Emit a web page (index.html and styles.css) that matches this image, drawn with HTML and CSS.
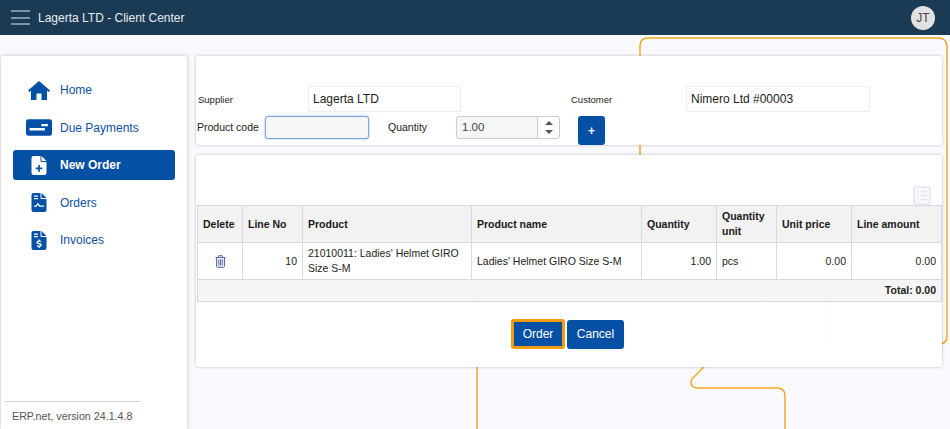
FILE: index.html
```html
<!DOCTYPE html>
<html>
<head>
	<title>Lagerta LTD - Client Center</title>
	<link rel="stylesheet" href="styles.css">
</head>
<body>
	<svg class="lines" width="950" height="429" viewBox="0 0 950 429">
		<path d="M640 160V46q0-8 8-8H938q9 0 9 9V336q0 8-8 8H828V300"/>
		<path d="M477 429V300"/>
		<path d="M785 429V396q0-8-8-8H698q-7 0-7-6q0-3 3-5L770 300"/>
	</svg>

	<header class="topbar">
		<div class="burger"><span></span><span></span><span></span></div>
		<div class="app-title">Lagerta LTD - Client Center</div>
		<div class="avatar">JT</div>
	</header>

	<div class="main">
		<aside class="sidebar">
			<nav class="nav">
				<a class="nav-item">
					<svg class="nav-icon" viewBox="0 0 22 19"><path d="M11 0L0 9.500 1.300 11 3 9.600V19H8.500V12.500H13.500V19H19V9.600L20.700 11 22 9.500Z"/></svg>
					Home
				</a>
				<a class="nav-item">
					<svg class="nav-icon" viewBox="0 0 22 14"><path fill-rule="evenodd" d="M2 0H20Q22 0 22 2V12Q22 14 20 14H2Q0 14 0 12V2Q0 0 2 0ZM3 7.500V9.500H16V7.500ZM13 4V6H18.500V4Z"/></svg>
					Due Payments
				</a>
				<a class="nav-item active">
					<svg class="nav-icon" viewBox="0 0 15 19"><path fill-rule="evenodd" d="M2 0H9V5Q9 6 10 6H15V17Q15 19 13 19H2Q0 19 0 17V2Q0 0 2 0ZM10 0L15 5H10ZM6.700 9V11.500H4.200V13.200H6.700V15.700H8.400V13.200H10.900V11.500H8.400V9Z"/></svg>
					New Order
				</a>
				<a class="nav-item">
					<svg class="nav-icon" viewBox="0 0 15 19"><path fill-rule="evenodd" d="M2 0H9V5Q9 6 10 6H15V17Q15 19 13 19H2Q0 19 0 17V2Q0 0 2 0ZM10 0L15 5H10ZM2.500 2.500V3.700H6.500V2.500ZM2.500 5V6.200H6.500V5ZM2.500 12.500V13.700H5L6.300 11.800 7.800 13.700H12.500V12.500H8.500L6.300 9.800 4.400 12.500Z"/></svg>
					Orders
				</a>
				<a class="nav-item">
					<svg class="nav-icon" viewBox="0 0 15 19"><path fill-rule="evenodd" d="M2 0H9V5Q9 6 10 6H15V17Q15 19 13 19H2Q0 19 0 17V2Q0 0 2 0ZM10 0L15 5H10ZM2.500 2.500V3.700H6.500V2.500ZM2.500 5V6.200H6.500V5ZM7 8.500V9.500C5.700 9.700 5 10.500 5 11.500C5 13.800 8.800 13 8.800 14.200C8.800 14.800 7 14.800 5.400 14.200V15.500C6 15.700 6.500 15.800 7 15.800V17H8.200V15.800C9.500 15.600 10.200 14.900 10.200 13.900C10.200 11.600 6.400 12.400 6.400 11.300C6.400 10.700 8 10.700 9.600 11.200V10C9.100 9.800 8.700 9.700 8.200 9.600V8.500Z"/></svg>
					Invoices
				</a>
			</nav>
			<div class="version">ERP.net, version 24.1.4.8</div>
		</aside>

		<div class="content">
			<section class="panel order-form">
				<div class="form-row">
					<label class="lbl-small lbl-supplier">Supplier</label>
					<div class="field field-supplier">Lagerta LTD</div>
					<label class="lbl-small lbl-customer">Customer</label>
					<div class="field field-customer">Nimero Ltd #00003</div>
				</div>
				<div class="form-row row-entry">
					<label class="lbl lbl-code">Product code</label>
					<div class="input input-code"></div>
					<label class="lbl lbl-qty">Quantity</label>
					<div class="input input-qty">
						<span class="qty-value">1.00</span>
						<span class="spinner"><i class="arrow-up"></i><i class="arrow-down"></i></span>
					</div>
					<button type="button" class="btn btn-add">+</button>
				</div>
			</section>

			<section class="panel order-lines">
				<div class="toolbar">
					<svg class="list-icon" width="18" height="19" viewBox="0 0 18 19"><rect x="1" y="1" width="16" height="17" rx="1.500"/><path d="M4 5.500H5.500M7.500 5.500H14M4 9.500H5.500M7.500 9.500H14M4 13.500H5.500M7.500 13.500H14"/></svg>
				</div>
				<table class="lines-table">
					<colgroup>
						<col class="c-del"><col class="c-no"><col class="c-prod"><col class="c-name"><col class="c-qty"><col class="c-unit"><col class="c-price"><col class="c-amount">
					</colgroup>
					<tr>
						<th>Delete</th>
						<th>Line No</th>
						<th>Product</th>
						<th>Product name</th>
						<th>Quantity</th>
						<th>Quantity unit</th>
						<th>Unit price</th>
						<th>Line amount</th>
					</tr>
					<tr>
						<td class="center">
							<svg class="trash" width="11" height="13" viewBox="0 0 11 13"><path d="M.5 2.500H10.500M3.500 2.500V1.200Q3.500 .6 4.100 .6H6.900Q7.500 .6 7.500 1.200V2.500M1.500 2.500V11.300Q1.500 12.400 2.600 12.400H8.400Q9.500 12.400 9.500 11.300V2.500M3.800 4.500V10.500M5.500 4.500V10.500M7.200 4.500V10.500"/></svg>
						</td>
						<td class="num">10</td>
						<td>21010011: Ladies' Helmet GIRO Size S-M</td>
						<td>Ladies' Helmet GIRO Size S-M</td>
						<td class="num">1.00</td>
						<td>pcs</td>
						<td class="num">0.00</td>
						<td class="num">0.00</td>
					</tr>
					<tr class="total-row">
						<td colspan="8" class="num">Total: 0.00</td>
					</tr>
				</table>
				<div class="actions">
					<button type="button" class="btn btn-order">Order</button>
					<button type="button" class="btn btn-cancel">Cancel</button>
				</div>
			</section>
		</div>
	</div>
</body>
</html>
```

FILE: styles.css
```css
html, body {
	margin: 0;
	height: 429px;
	overflow: hidden;
}

body {
	background-color: #f9f9fe;
	font-family: "Liberation Sans", Arial, sans-serif;
	font-size: 11px;
	color: #222;
}

.lines {
	position: absolute;
	left: 0;
	top: 0;
	z-index: -1;
}

.lines path {
	fill: none;
	stroke: #f5a623;
	stroke-width: 1.5;
}

/* top bar */
.topbar {
	height: 35px;
	background-color: #1b3a54;
	display: flex;
	align-items: center;
	padding: 0 15px 0 11px;
}

.burger {
	width: 19px;
	height: 15px;
	display: flex;
	flex-direction: column;
	justify-content: space-between;
}

.burger span {
	display: block;
	height: 2px;
	background-color: #7f93a4;
}

.app-title {
	margin-left: 8px;
	font-size: 12px;
	color: #e6ecf1;
}

.avatar {
	margin-left: auto;
	width: 24px;
	height: 24px;
	border-radius: 50%;
	background-color: #e2e2e2;
	color: #444;
	font-size: 12px;
	line-height: 24px;
	text-align: center;
}

/* page */
.main {
	display: flex;
	height: 373px;
	padding: 21px 0 0 1px;
	gap: 9px;
}

.sidebar {
	width: 186px;
	background-color: #fff;
	border-radius: 3px 3px 0 0;
	box-shadow: 0 0 4px rgba(60, 60, 90, .3);
	display: flex;
	flex-direction: column;
}

.nav {
	display: flex;
	flex-direction: column;
	gap: 7.5px;
	padding: 19px 12px 0;
}

.nav-item {
	height: 30px;
	display: flex;
	align-items: center;
	gap: 8px;
	padding-left: 13px;
	border-radius: 3px;
	font-size: 12px;
	color: #0d51a6;
}

.nav-icon {
	width: 26px;
	height: 19px;
	fill: #0450a5;
}

.nav-item.active {
	background-color: #0450a5;
	color: #fff;
	font-weight: bold;
}

.nav-item.active .nav-icon {
	fill: #fff;
}

.version {
	margin: auto 46px 0 4px;
	border-top: 1px solid #d5d5d5;
	padding: 8px 0 7px 7px;
	font-size: 10.7px;
	color: #555;
	white-space: nowrap;
}

.content {
	width: 746px;
	display: flex;
	flex-direction: column;
	gap: 10px;
}

.panel {
	background-color: rgba(255, 255, 255, .985);
	border-radius: 3px;
	box-shadow: 0 0 3px rgba(60, 60, 90, .35);
}

/* order form */
.order-form {
	height: 89px;
	padding-top: 30px;
	box-sizing: border-box;
}

.form-row {
	display: flex;
	align-items: center;
}

.row-entry {
	margin-top: 4px;
	align-items: flex-start;
}

.lbl-small {
	font-size: 9.5px;
	color: #222;
}

.lbl-supplier {
	width: 110px;
	padding-left: 2px;
}

.lbl-customer {
	width: 115px;
	margin-left: 110px;
}

.field {
	height: 26px;
	box-sizing: border-box;
	border: 1px solid #eee;
	padding-left: 4px;
	font-size: 12px;
	line-height: 24px;
	color: #222;
}

.field-supplier {
	width: 153px;
}

.field-customer {
	width: 184px;
}

.lbl {
	font-size: 10.5px;
	line-height: 23px;
	color: #222;
}

.lbl-code {
	width: 68px;
	padding-left: 1px;
}

.lbl-qty {
	width: 68px;
	margin-left: 19px;
}

.input {
	height: 23px;
	width: 104px;
	box-sizing: border-box;
	border-radius: 3px;
	background-color: #f5f7f7;
	border: 1px solid #ccc;
}

.input-code {
	border-color: #80a4dc;
	box-shadow: 0 0 2px #80a4dc;
}

.input-qty {
	display: flex;
	justify-content: space-between;
	padding-left: 5px;
	font-size: 11.500px;
	line-height: 21px;
	color: #444;
}

.spinner {
	width: 22px;
	background-color: #fff;
	border-left: 1px solid #ccc;
	border-radius: 0 3px 3px 0;
	display: flex;
	flex-direction: column;
	align-items: center;
	gap: 5px;
	padding-top: 4px;
	box-sizing: border-box;
}

.arrow-up, .arrow-down {
	width: 0;
	height: 0;
	border-left: 4px solid transparent;
	border-right: 4px solid transparent;
}

.arrow-up {
	border-bottom: 4px solid #555;
}

.arrow-down {
	border-top: 4px solid #555;
}

.btn {
	background-color: #0450a5;
	color: #fff;
	border: 0;
	border-radius: 3px;
	font-family: inherit;
	font-size: 12px;
	padding: 0;
}

.btn-add {
	width: 27px;
	height: 29px;
	margin-left: 18px;
	font-weight: bold;
}

/* lines */
.order-lines {
	height: 212px;
}

.toolbar {
	height: 50px;
	display: flex;
	justify-content: flex-end;
	align-items: flex-end;
	padding-right: 11px;
}

.list-icon {
	fill: #f8f8fe;
	stroke: #e2e3f2;
	stroke-width: 1.500;
}

.lines-table {
	width: 744px;
	margin-left: 1px;
	table-layout: fixed;
	border-collapse: collapse;
	font-size: 10.5px;
	line-height: 15px;
}

.c-del { width: 45px; }
.c-no { width: 60px; }
.c-prod { width: 169px; }
.c-name { width: 170px; }
.c-qty { width: 75px; }
.c-unit { width: 60px; }
.c-price { width: 75px; }
.c-amount { width: 90px; }

.lines-table th, .lines-table td {
	border: 1px solid #d5d9e0;
	padding: 0 5px;
	height: 37px;
	box-sizing: border-box;
	text-align: left;
	color: #222;
}

.lines-table th {
	background-color: #f2f2f2;
	font-weight: bold;
	color: #1a1a1a;
}

.lines-table .num {
	text-align: right;
}

.lines-table .center {
	text-align: center;
}

.lines-table .total-row td {
	background-color: #f5f5f5;
	font-weight: bold;
	height: 22px;
}

.trash {
	fill: #e2e6f4;
	stroke: #5f6fa8;
	stroke-width: 1;
	vertical-align: middle;
}

.actions {
	display: flex;
	justify-content: center;
	align-items: center;
	gap: 2px;
	margin-top: 17px;
	padding-right: 3px;
}

.btn-order {
	width: 54px;
	height: 30px;
	border: 3px solid #f39c12;
}

.btn-cancel {
	width: 57px;
	height: 29px;
}
```
